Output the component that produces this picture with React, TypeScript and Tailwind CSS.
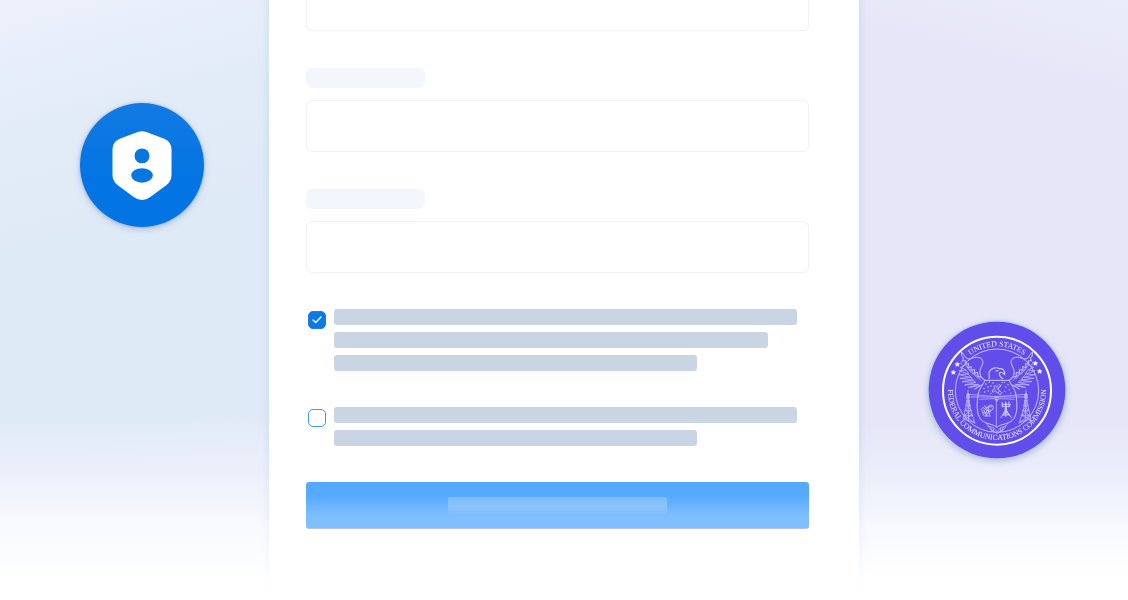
import React from "react";

function Star({ x, y }: { x: number; y: number }) {
  return (
    <path
      transform={`translate(${x} ${y})`}
      d="M0-7 2-2.4 7-2 3.2 1.3 4.4 6 0 3.5-4.4 6-3.2 1.3-7-2-2-2.4Z"
      fill="#fff"
      stroke="#fff"
      strokeWidth="1.5"
    />
  );
}

function WingAndTower() {
  return (
    <g>
      <path d="M133 125L149 145C160 151 167 140 184 142C198 145 200 154 195 166C190 176 186 186 190 196C193 204 198 209 204 211" strokeWidth="3" />
      <path d="M133 125L135 140L140 143L137 152L147 153L144 163L155 161L152 173L163 170L162 181L173 178L172 189L182 187L183 200L193 201L203 211" strokeWidth="3" />
      <path d="M137 152L131 160L141 168L130 172L147 180L126 182L153 192L126 194L160 202L129 205L168 210L135 215L177 217L143 225L185 223L154 233L192 226L172 238L198 222" />
      <path d="M144 163L160 184M152 173L170 195M163 181L182 206M173 189L192 212M147 180L156 192M153 192L165 204M160 202L174 214" />
      <path d="M153 249L146 294L138 327M153 249L160 295L174 341M153 249L155 334M149 272H158M148 286H160M145 301H163M142 316H167M139 327L173 338M149 272L160 286L145 301L167 316L139 327M158 272L148 286L163 301L142 316L173 338" />
      <path d="M149 254H157V264H149ZM153 240V252" />
    </g>
  );
}

function Seal() {
  return (
    <svg viewBox="0 0 480 480" className="size-40 overflow-visible drop-shadow-[0_2px_3px_rgba(120,155,200,0.55)]" role="img" aria-label="Federal Communications Commission">
      <defs>
        <path id="upper-arc" d="M107 242A133 133 0 0 1 373 242" />
        <path id="lower-arc" d="M104 187A147 147 0 1 0 376 187" />
      </defs>
      <circle cx="240" cy="240" r="208" fill="#bccbe3" />
      <circle cx="240" cy="240" r="205" fill="#614eea" />
      <circle cx="240" cy="242" r="162" fill="none" stroke="#fff" strokeWidth="6" />
      <circle cx="240" cy="242" r="125" fill="none" stroke="#d8d3fa" strokeWidth="2.5" />
      <path d="M127 136L139 123L154 143L139 157ZM353 136L341 123L326 143L341 157Z" fill="#614eea" />
      <g fill="#f1efff" fontFamily="'Liberation Serif', serif" fontSize="23">
        <text textAnchor="middle">
          <textPath href="#upper-arc" startOffset="50%">UNITED STATES</textPath>
        </text>
        <text textAnchor="middle">
          <textPath href="#lower-arc" startOffset="50%">FEDERAL COMMUNICATIONS COMMISSION</textPath>
        </text>
      </g>
      <Star x={109} y={187} />
      <Star x={121} y={163} />
      <Star x={355} y={160} />
      <Star x={368} y={184} />
      <g fill="none" stroke="#cec8fa" strokeWidth="2" strokeLinejoin="round">
        <WingAndTower />
        <g transform="translate(480 0) scale(-1 1)">
          <WingAndTower />
        </g>
        <path d="M216 207C220 196 213 193 217 185C222 175 237 170 247 176C257 175 265 181 263 194C259 187 252 187 248 188C244 196 252 202 258 207M235 183L244 182" strokeWidth="3.5" />
        <path d="M203 211H277C280 225 296 235 298 262C302 293 299 319 286 331C270 344 253 341 240 352C227 341 210 344 194 331C181 319 178 293 182 262C184 235 200 225 203 211Z" strokeWidth="3" />
        <path d="M153 253L230 259H250L327 253M160 261H322M187 268L231 266L239 270L249 266L293 268M238 260V351M233 262H245L239 275Z" />
        <path d="M239 232L247 223L252 228L243 237L248 243L241 249L235 241L228 247L225 242L234 235L230 230L236 226ZM246 242L255 248L250 254L241 247" strokeWidth="2.6" />
        <path d="M240 239L255 222" />
        <circle cx="221" cy="293" r="8" strokeWidth="2.6" />
        <path d="M192 299L197 292L207 298L210 309L201 309ZM202 286L216 306L206 318M215 301L218 318M196 307L201 317M202 318H221M207 292L225 290M210 301L223 306M200 298L209 318" strokeWidth="2.6" />
        <path d="M266 277L264 303L251 324M266 277L269 303L284 324M253 283H282M254 289H280M261 305H272M257 315H277M261 305L277 315M272 305L257 315M266 275V320M256 276V292M276 274V292" strokeWidth="3" />
        <path d="M207 339C215 354 223 348 230 354L240 365L250 354C257 348 265 354 273 339M211 346Q221 363 232 365L240 370L248 365Q259 363 269 346M229 352V366M251 352V366M220 350L226 364M260 350L254 364" />
      </g>
      <g fill="#d8d3fa">
        {[[207, 222], [217, 216], [228, 219], [263, 217], [273, 224], [201, 235], [213, 231], [222, 228], [203, 246], [214, 243], [222, 250], [266, 231], [277, 239], [263, 244], [281, 250], [256, 217]].map(([x, y]) => (
          <circle key={`${x}-${y}`} cx={x} cy={y} r="2" />
        ))}
      </g>
    </svg>
  );
}

function ShieldBadge() {
  return (
    <div className="flex size-[124px] items-center justify-center rounded-full bg-linear-to-b from-[#127ae2] to-[#0274e3] to-60% shadow-[0_2px_6px_rgba(125,145,200,0.55),0_0_2px_rgba(130,150,190,0.7)]">
      <svg viewBox="0 0 180 208" className="h-[69px] w-[60px]" aria-hidden="true">
        <path
          fill="#fff"
          d="M77 3Q90-2 103 3L157 23Q179 32 179 56V132Q179 151 164 163L114 200Q90 216 66 200L16 163Q1 151 1 132V56Q1 32 23 23Z"
        />
        <circle cx="90" cy="75" r="22.500" fill="#0877e2" />
        <ellipse cx="90" cy="134" rx="32.500" ry="22" fill="#0576e2" />
      </svg>
    </div>
  );
}

const inputStyle = "block h-[52px] w-full rounded-md border border-[#f0f1fb] bg-white px-4 outline-none";

function Field({ id, name }: { id: string; name: string }) {
  return (
    <div className="flex flex-col gap-3">
      <label htmlFor={id} aria-label={name} className="block h-5 w-[119px] rounded-md bg-[#f3f6fc]" />
      <input id={id} type="text" aria-label={name} className={inputStyle} />
    </div>
  );
}

function Consent({ id, name, checked, children }: { id: string; name: string; checked?: boolean; children: React.ReactNode }) {
  return (
    <div className="flex items-start gap-2 pl-0.5">
      <span className="mt-0.5 grid size-[18px] shrink-0 place-items-center">
        <input
          id={id}
          type="checkbox"
          defaultChecked={checked}
          aria-label={name}
          className="peer col-start-1 row-start-1 size-[18px] appearance-none rounded-[5px] border border-[#3f98f4] bg-white checked:border-[#1b80e8] checked:bg-[#0e79e3]"
        />
        <svg viewBox="0 0 18 18" className="pointer-events-none col-start-1 row-start-1 hidden size-[18px] peer-checked:block" aria-hidden="true">
          <path d="M5 9 7.700 11.500 13 6" fill="none" stroke="#fff" strokeWidth="1.300" strokeLinecap="round" strokeLinejoin="round" />
        </svg>
      </span>
      <label htmlFor={id} className="flex min-w-0 flex-1 flex-col gap-[7px]">
        {children}
      </label>
    </div>
  );
}

const lineStyle = "h-4 max-w-full rounded-[3px] bg-[#cad5e3]";

export default function App() {
  return (
    <div className="relative grid min-h-screen grid-cols-[minmax(0,1fr)_minmax(0,590px)_minmax(0,1fr)] overflow-hidden bg-white">
      <aside className="bg-[linear-gradient(to_bottom,rgba(237,240,251,0)_69%,#edf0fb_79%,#f8f9fd_87%,#fff_97%),linear-gradient(165deg,#edf1fc_0%,#e2ecf7_20%,#deeaf6_42%,#deeaf6_70%,#e2ebf7_80%)] pt-[103px] pl-20">
        <ShieldBadge />
      </aside>

      <main className="relative z-10 overflow-hidden bg-white pr-[50px] pl-[37px]">
        <form className="-mt-[21px] flex flex-col gap-9" onSubmit={(e) => e.preventDefault()}>
          <div className="flex flex-col gap-[37px]">
            <input type="text" aria-label="Full name" className={inputStyle} />
            <Field id="email" name="Email" />
            <Field id="phone" name="Phone" />
          </div>
          <Consent id="consent" name="Consent to be contacted" checked>
            <span className={`${lineStyle} w-[463px]`} />
            <span className={`${lineStyle} w-[434px]`} />
            <span className={`${lineStyle} w-[363px]`} />
          </Consent>
          <Consent id="terms" name="Accept the terms">
            <span className={`${lineStyle} w-[463px]`} />
            <span className={`${lineStyle} w-[363px]`} />
          </Consent>
          <button
            type="submit"
            aria-label="Submit"
            className="flex h-[47px] w-full items-center justify-center rounded-[3px] border-b border-[#b5bfe8] bg-linear-to-b from-[#55a9ff] from-30% to-[#80bfff] to-75%"
          >
            <span className="h-[17px] w-[219px] rounded-xs bg-linear-to-b from-[#80bfff] from-20% via-[#8ec2fa] to-[#80bfff]" />
          </button>
        </form>
      </main>

      <aside className="flex justify-end bg-[linear-gradient(to_bottom,rgba(238,240,251,0)_71%,#eef0fb_81%,#f8f9fd_88%,#fff_97%),linear-gradient(195deg,#ebecfa_0%,#e6e6f8_15%,#e6e6f8_100%)] pt-[310px] pr-[51px]">
        <Seal />
      </aside>
      <div className="pointer-events-none absolute inset-y-0 left-1/2 w-[590px] max-w-full -translate-x-1/2 shadow-[0_0_6px_2px_rgba(190,212,238,0.55)] mask-no-clip mask-b-from-70% mask-b-to-100%" />
    </div>
  );
}
